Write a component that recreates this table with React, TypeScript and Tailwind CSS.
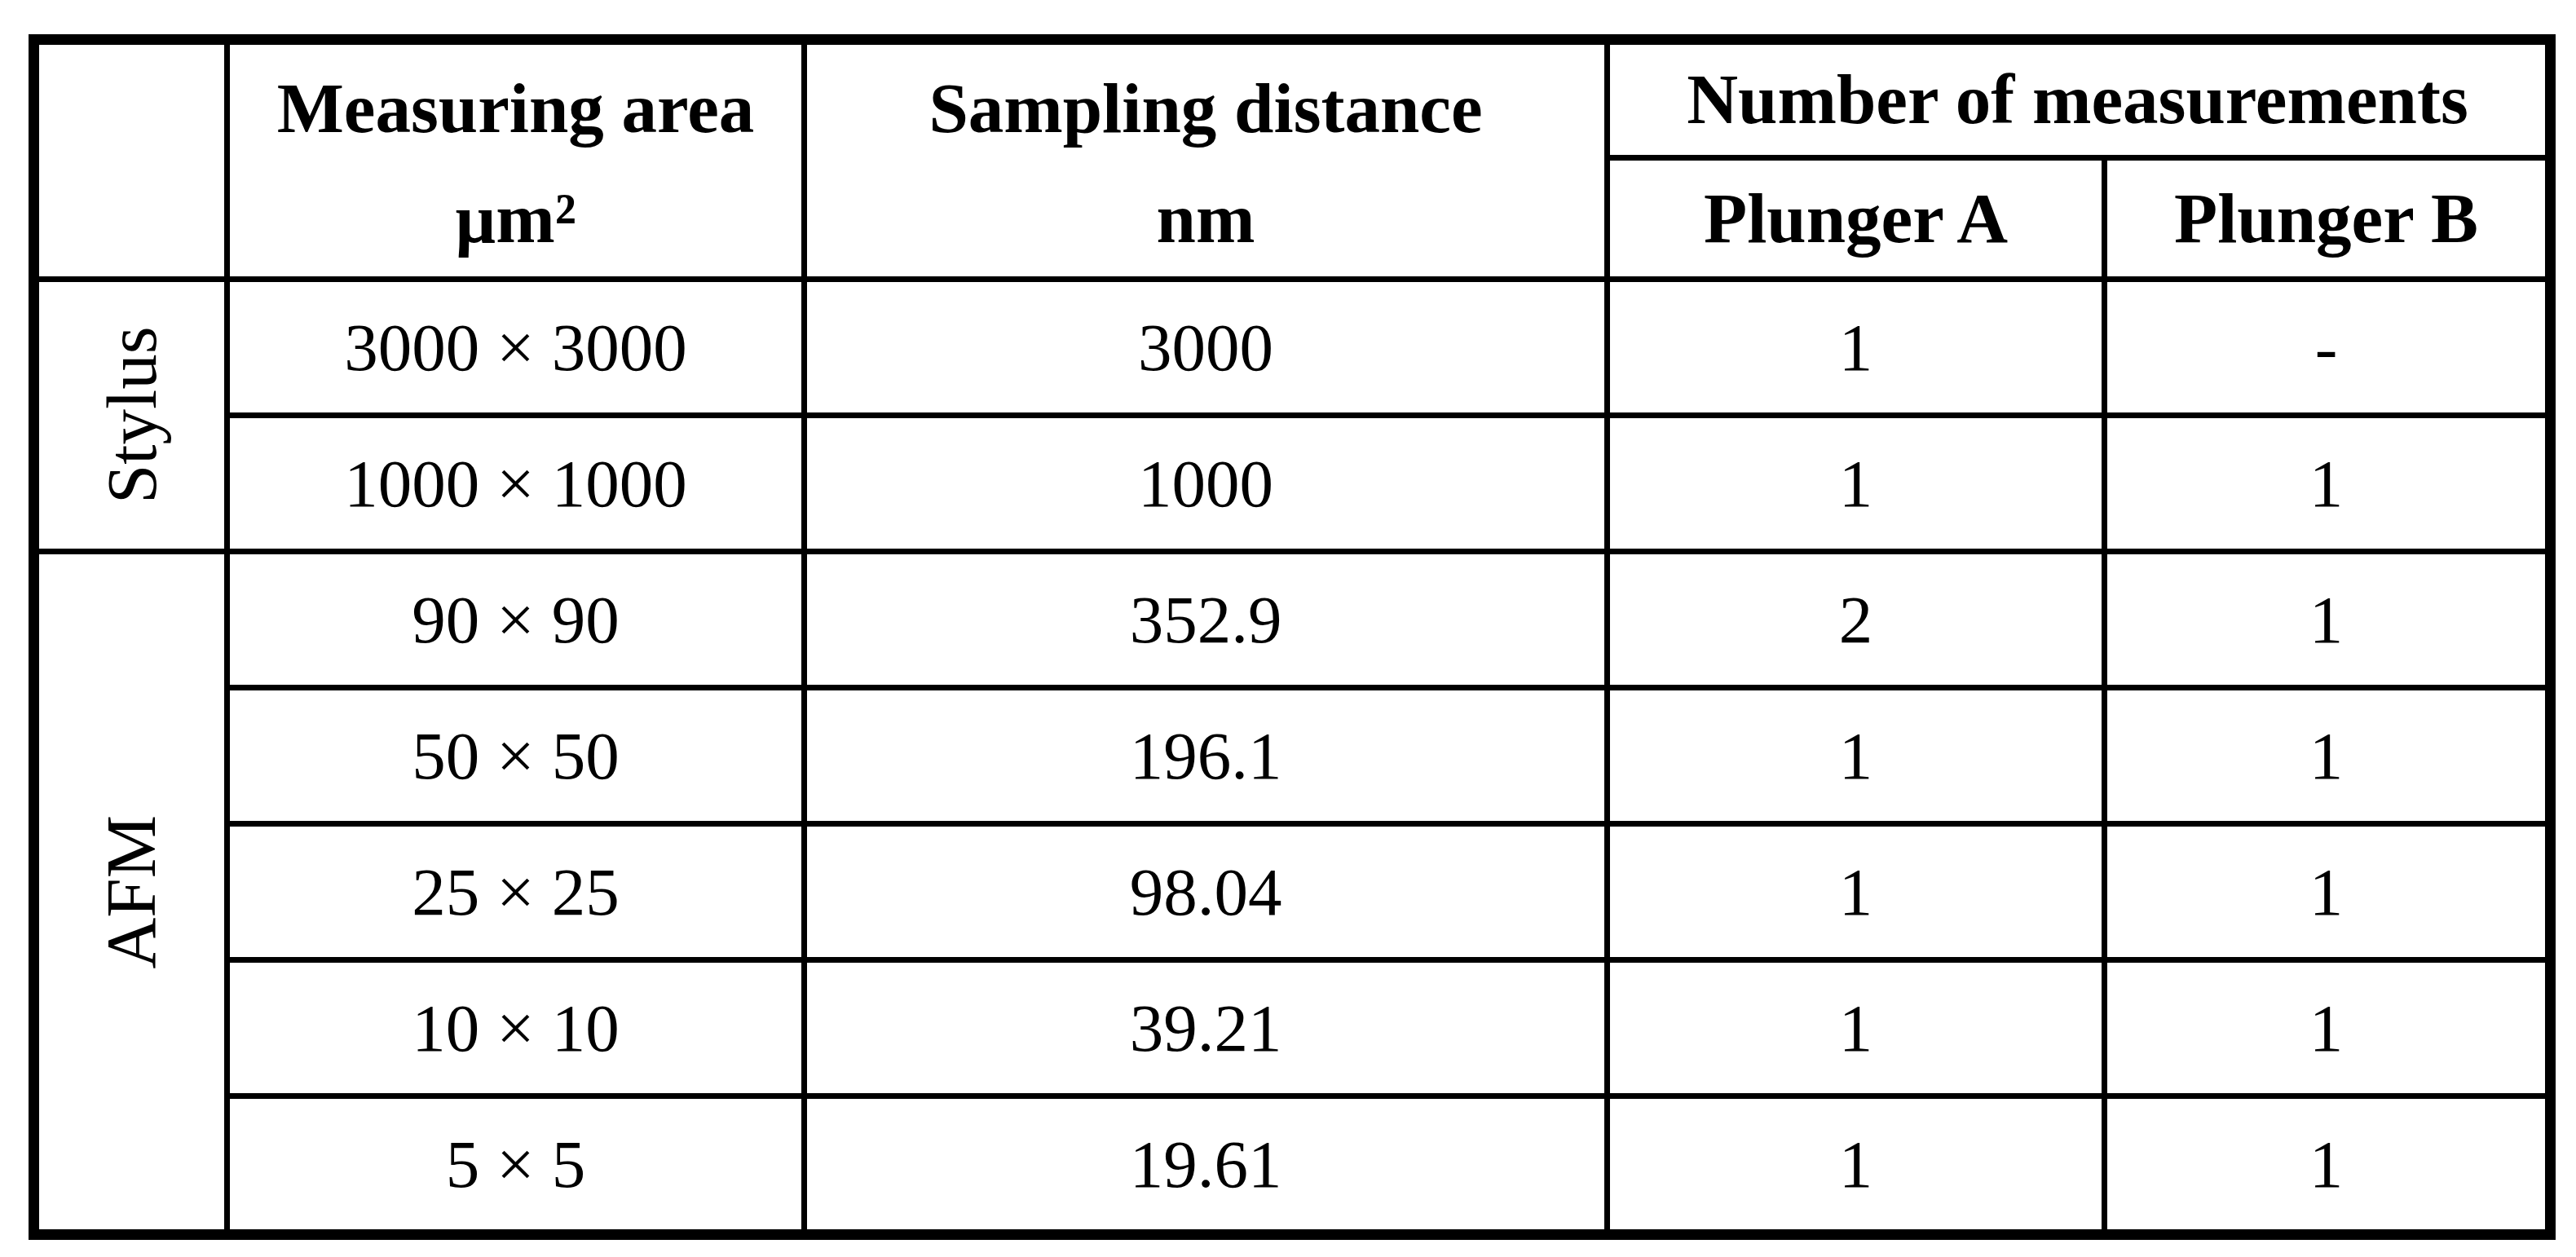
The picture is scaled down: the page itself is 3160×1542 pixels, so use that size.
const rows = [
  { area: "3000 × 3000", dist: "3000", a: "1", b: "-" },
  { area: "1000 × 1000", dist: "1000", a: "1", b: "1" },
  { area: "90 × 90", dist: "352.9", a: "2", b: "1" },
  { area: "50 × 50", dist: "196.1", a: "1", b: "1" },
  { area: "25 × 25", dist: "98.04", a: "1", b: "1" },
  { area: "10 × 10", dist: "39.21", a: "1", b: "1" },
  { area: "5 × 5", dist: "19.61", a: "1", b: "1" },
];

function Cell({ children, className = "" }: { children?: React.ReactNode; className?: string }) {
  return <div className={`flex items-center justify-center bg-white text-center ${className}`}>{children}</div>;
}

function GroupLabel({ label, span }: { label: string; span: string }) {
  return (
    <Cell className={`${span} text-[87px]`}>
      <span className="-rotate-90 whitespace-nowrap">{label}</span>
    </Cell>
  );
}

export default function App() {
  return (
    <div className="min-h-screen bg-white pl-[35px] pt-[42px] font-['Liberation_Serif',serif] text-black">
      <div className="grid w-[3100px] grid-cols-[227px_701px_978px_603px_1fr] grid-rows-[135px_142px_repeat(7,160px)] gap-[7px] bg-black p-[13px]">
        {/* header */}
        <Cell className="row-span-2" />
        <Cell className="row-span-2 pt-[6px] text-[87px] font-bold leading-[135px]">
          <div>
            Measuring area
            <br />
            µm²
          </div>
        </Cell>
        <Cell className="row-span-2 pt-[6px] text-[87px] font-bold leading-[135px]">
          <div>
            Sampling distance
            <br />
            nm
          </div>
        </Cell>
        <Cell className="col-span-2 text-[87px] font-bold">Number of measurements</Cell>
        <Cell className="text-[87px] font-bold">Plunger A</Cell>
        <Cell className="text-[87px] font-bold">Plunger B</Cell>

        {/* body */}
        {rows.map((r, i) => [
          i === 0 && <GroupLabel key="stylus" label="Stylus" span="row-span-2" />,
          i === 2 && <GroupLabel key="afm" label="AFM" span="row-span-5" />,
          <Cell key={`area-${i}`} className="text-[83px]">{r.area}</Cell>,
          <Cell key={`dist-${i}`} className="text-[83px]">{r.dist}</Cell>,
          <Cell key={`a-${i}`} className="text-[83px]">{r.a}</Cell>,
          <Cell key={`b-${i}`} className="text-[83px]">{r.b}</Cell>,
        ])}
      </div>
    </div>
  );
}
